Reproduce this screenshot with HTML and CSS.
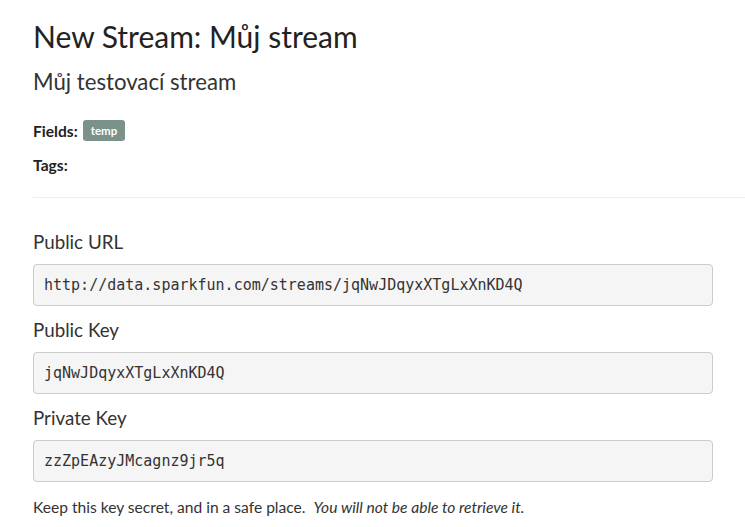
FILE: index.html
```html
<!DOCTYPE html>
<html>
<head>
<meta charset="utf-8">
<link rel="stylesheet" href="styles.css">
</head>
<body>
<div class="page">
  <h1 class="title">New Stream: Můj stream</h1>
  <h3 class="subtitle">Můj testovací stream</h3>
  <div class="meta">
    <div class="meta-row"><strong>Fields:</strong><span class="badge">temp</span></div>
    <div class="meta-row"><strong>Tags:</strong></div>
  </div>
  <hr class="rule">
  <div class="field first">
    <h4 class="label">Public URL</h4>
    <pre class="code">http://data.sparkfun.com/streams/jqNwJDqyxXTgLxXnKD4Q</pre>
  </div>
  <div class="field">
    <h4 class="label">Public Key</h4>
    <pre class="code">jqNwJDqyxXTgLxXnKD4Q</pre>
  </div>
  <div class="field">
    <h4 class="label">Private Key</h4>
    <pre class="code">zzZpEAzyJMcagnz9jr5q</pre>
  </div>
  <p class="note">Keep this key secret, and in a safe place. &nbsp;<em>You will not be able to retrieve it.</em></p>
</div>
</body>
</html>
```
FILE: styles.css
```css
html, body {
  margin: 0;
  padding: 0;
  background: #fff;
}
body {
  font-family: "Lato", "Open Sans", sans-serif;
  color: #333;
  font-size: 15.6px;
}
.page {
  padding: 0 32px 0 33px;
}
.title {
  margin: 0;
  padding-top: 17px;
  font-size: 30px;
  font-weight: 400;
  line-height: 38px;
  color: #222;
}
.subtitle {
  margin: 12px 0 0;
  font-size: 22.2px;
  font-weight: 400;
  line-height: 30px;
  color: #333;
}
.meta {
  margin-top: 24px;
}
.meta-row {
  height: 34px;
  line-height: 20px;
  display: flex;
  align-items: flex-start;
  gap: 5px;
}
.meta-row strong {
  font-weight: 700;
  color: #222;
}
.badge {
  display: inline-block;
  background: #7a9289;
  color: #fff;
  font-size: 11.5px;
  font-weight: 700;
  padding: 0 8px;
  line-height: 21px;
  border-radius: 3px;
  margin-top: -1px;
}
.rule {
  border: 0;
  border-top: 1px solid #eee;
  margin: 8px -32px 0 0;
}
.label {
  margin: 0;
  font-size: 18.8px;
  font-weight: 400;
  line-height: 22px;
  padding-top: 13px;
  padding-bottom: 11px;
  color: #333;
}
.field.first .label {
  padding-top: 33px;
}
.code {
  margin: 0;
  height: 42px;
  box-sizing: border-box;
  padding: 0 10px;
  line-height: 40px;
  font-family: "DejaVu Sans Mono", monospace;
  font-size: 15px;
  color: #333;
  background: #f5f5f5;
  border: 1px solid #ccc;
  border-radius: 4px;
}
.note {
  margin: 15px 0 0;
  line-height: 20px;
}
```
